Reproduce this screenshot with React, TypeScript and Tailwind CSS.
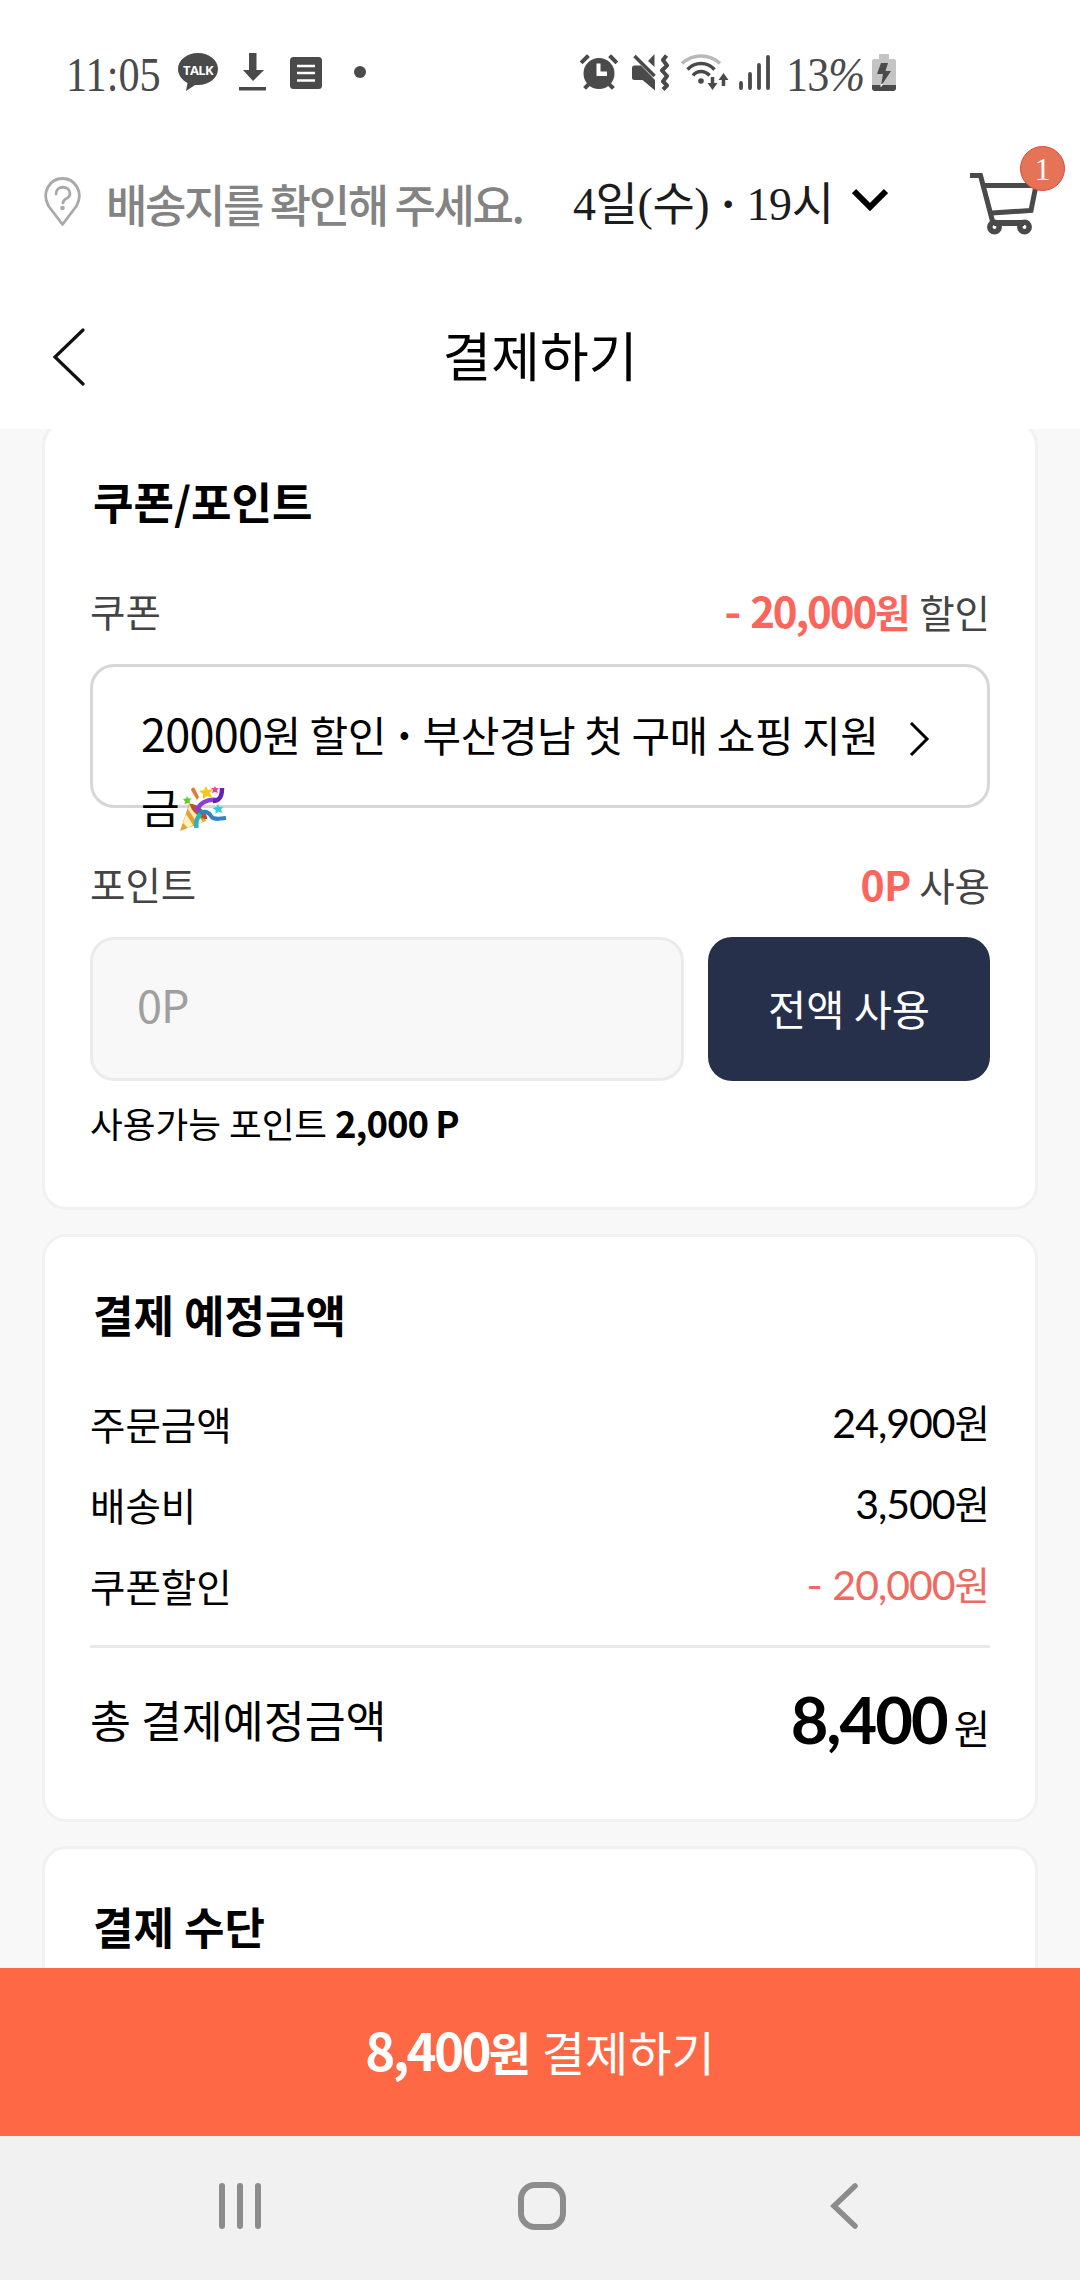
import type { ReactNode } from "react";

const prices = [
  { label: "주문금액", sign: "", amount: "24,900", color: "text-black" },
  { label: "배송비", sign: "", amount: "3,500", color: "text-black" },
  { label: "쿠폰할인", sign: "-", amount: "20,000", color: "text-[#f0695f]" },
];

const AlarmIcon = () => (
  <svg width="38" height="36" viewBox="0 0 38 36" fill="#4a4a4a">
    <path
      d="M2.500 7.500 7 3M35.500 7.500 31 3M6 33l5-5M32 33l-5-5"
      stroke="#4a4a4a"
      strokeWidth="4"
      strokeLinecap="square"
    />
    <circle cx="19" cy="19.500" r="15.500" />
    <path d="M16.500 9.500h4v8h6.500v4.500H16.500z" fill="#fff" />
  </svg>
);

const MuteIcon = () => (
  <svg width="37" height="37" viewBox="0 0 37 37" fill="#4a4a4a">
    <path d="M0 14q0-2.500 2.500-2.500H9L23 26v10.500L10.500 26H2.500Q0 26 0 23.500z" />
    <path d="M22.500 0v13L16 7z" />
    <path d="M2.500 2 22.500 22" stroke="#4a4a4a" strokeWidth="3.500" />
    <path
      d="M34.500 1.500 31 6l4 5.500-5 5 5 5.500-4 5.500 4 4-4 4"
      fill="none"
      stroke="#4a4a4a"
      strokeWidth="4"
      strokeLinejoin="round"
    />
  </svg>
);

const WifiIcon = () => (
  <svg width="49" height="37" viewBox="0 0 49 37" fill="none">
    <g stroke="#4a4a4a" strokeWidth="3.500">
      <path d="M1 9.500Q9 2 20 2t19 7.500" stroke="#b9b9b9" />
      <path d="M6.500 15.500Q12 9.500 20 9.500t13.500 6" />
      <path d="M12 21.500Q15 17.500 20 17.500T28.500 21.500" />
      <path d="M31.500 23v9M42.500 32v-9" />
    </g>
    <circle cx="20" cy="27" r="2.800" fill="#4a4a4a" />
    <path d="M26.500 29h10l-5 7zM37.500 26h10l-5-7z" fill="#4a4a4a" />
  </svg>
);

const BatteryIcon = () => (
  <svg width="24" height="37" viewBox="0 0 24 37">
    <path d="M7 0h10v5h5q2 0 2 2v27q0 3-3 3H3q-3 0-3-3V7q0-2 2-2h5z" fill="#c4c4c4" />
    <path d="M0 31h24v3q0 3-3 3H3q-3 0-3-3z" fill="#4a4a4a" />
    <path d="M9 9h7l-2.500 8H19L9 32l2-12H5z" fill="#4a4a4a" />
    <path d="m10.800 30-1.800 2.500V31z" fill="#fff" stroke="#fff" />
  </svg>
);

const StatusBar = () => (
  <div className="flex h-36 shrink-0 items-center font-['Liberation_Serif',serif] text-[48px] leading-[56px] text-[#4a4a4a]">
    <div className="ml-[66px] mt-[6px] w-[112px]">
      <span className="inline-block origin-left scale-x-[0.88]">11:05</span>
    </div>
    <div className="relative h-[38px] w-10">
      <svg width="40" height="38" viewBox="0 0 40 38">
        <path
          d="M20 0C9 0 0 7 0 16c0 6 4 11 9.500 14L8 38l9-6h3c11 0 20-7 20-16S31 0 20 0z"
          fill="#4a4a4a"
        />
      </svg>
      <span className="absolute inset-x-0 top-[6px] text-center font-['Open_Sans',sans-serif] text-[13px] font-bold leading-[22px] tracking-[-0.6px] text-white">
        TALK
      </span>
    </div>
    <svg className="ml-[21px]" width="27" height="38" viewBox="0 0 27 38" fill="#4a4a4a">
      <path d="M10 0h7.500v17H25L14 28 4 17h6zM0 34h27v3.500H0z" />
    </svg>
    <svg className="ml-6 mt-[2px]" width="32" height="32" viewBox="0 0 32 32">
      <rect width="32" height="32" rx="3.500" fill="#4a4a4a" />
      <path d="M7 9h18M7 16h18M7 23.500h18" stroke="#fff" strokeWidth="2.500" />
    </svg>
    <span className="ml-8 h-3 w-3 rounded-full bg-[#4a4a4a]" />
    <div className="ml-[214px]">
      <AlarmIcon />
    </div>
    <div className="ml-[14px]">
      <MuteIcon />
    </div>
    <div className="ml-[12px]">
      <WifiIcon />
    </div>
    <svg className="ml-[9px]" width="31" height="36" viewBox="0 0 31 36">
      <path
        d="M2 29v5M11 20v14M20 11v23M29 3v31"
        stroke="#4a4a4a"
        strokeWidth="3.800"
        strokeLinecap="round"
      />
    </svg>
    <div className="ml-[16px] mt-[6px] w-[86px]">
      <span className="inline-block origin-left scale-x-[0.92] tracking-[-1px]">
        13<i>%</i>
      </span>
    </div>
    <BatteryIcon />
  </div>
);

const DeliveryBar = () => (
  <div className="flex h-[116px] shrink-0 items-center font-['Liberation_Serif','Noto_Sans_CJK_KR',serif]">
    <svg className="ml-11" width="37" height="50" viewBox="0 0 37 50" fill="none" stroke="#a9a9a9">
      <path
        d="M18.500 47.500 4.500 29C-3 15 6 1.500 18.500 1.500S40 15 32.500 29z"
        strokeWidth="2.800"
        strokeLinejoin="round"
      />
      <path d="M12 17c0-9 14-9 14 0 0 5-7 4-7 9" strokeWidth="2.800" strokeLinecap="round" />
      <circle cx="18.500" cy="31" r="2.300" fill="#a9a9a9" stroke="none" />
    </svg>
    <p className="ml-[25px] mt-[3px] w-[468px] whitespace-nowrap font-['Noto_Sans_CJK_KR',sans-serif] text-[45px] font-medium leading-[60px] tracking-[-2.4px] text-[#838383]">
      배송지를 확인해 주세요.
    </p>
    <p className="mt-[6px] -ml-px w-[279px] whitespace-nowrap text-[46px] leading-[60px] tracking-[-0.4px] text-[#1c1c1c]">
      4일(수) <b>·</b> 19시
    </p>
    <svg className="-mt-1" width="36" height="24" viewBox="0 0 36 24" fill="none">
      <path d="m2 3 16 16L34 3" stroke="#000" strokeWidth="6" />
    </svg>
    <div className="relative ml-[82px] mt-[4px]">
      <svg width="72" height="62" viewBox="0 0 72 62" fill="none" stroke="#4a4a4a">
        <path d="M0 2.500h10.500L23 50M14 12.500h52L61 37.500 22 40" strokeWidth="5" />
        <path d="M24 50h30" strokeWidth="6" />
        <circle cx="24.500" cy="54" r="4.700" strokeWidth="5.500" />
        <circle cx="54.500" cy="54" r="4.700" strokeWidth="5.500" />
      </svg>
      <span className="absolute -top-[27px] left-[50px] flex h-[45px] w-[45px] items-center justify-center rounded-full border border-[#e0483f] bg-[#e57355] text-[32px] leading-none text-white">
        1
      </span>
    </div>
  </div>
);

const Card = ({ title, className, children }: { title: string; className: string; children?: ReactNode }) => (
  <section
    className={`shrink-0 rounded-3xl border-[3px] border-[#f1f1f1] bg-white px-[45px] pt-[47px] ${className}`}
  >
    <h2 className="pl-[3px] text-[44px] font-bold leading-[60px]">{title}</h2>
    {children}
  </section>
);

const PartyPopper = () => (
  <svg className="-mt-2 ml-px inline-block" width="48" height="46" viewBox="0 0 48 46" fill="none">
    <path d="M0 45 9 18q4-1 9 4t8 13z" fill="#e2a13c" />
    <path d="m3 37 3-9 7 11-5 3zM8 23l2-4 13 17-5 2z" fill="#fff0b8" />
    <path d="M10 18c6-1 18 8 17 15-5 1-17-8-17-15z" fill="#b9502b" />
    <path d="M11 4c1-3 3-3 4-1l4 8-2 3z" fill="#e07b2f" />
    <path d="M17 25c2-8 10-12 19-11" stroke="#8a3fd6" strokeWidth="4.500" />
    <path d="M33 15c7 0 9-5 9-13" stroke="#6a22b4" strokeWidth="4.500" />
    <path d="M18 29c4-5 10-4 13 1 2 4 8 3 15 2" stroke="#2a86bd" strokeWidth="4" />
    <path d="M16.500 42c-1-6 0-10 4-14" stroke="#29b5bc" strokeWidth="4.500" />
    <path d="m26 0 2 4 5-1-3 4 2 5-5-2-4 3v-5l-4-3 5-1z" fill="#f8c81c" />
    <path d="m35 0 1 2h3l-2 2 1 3-3-1-3 1 1-3-2-2h3z" fill="#ee3f9b" />
    <path d="m7 10 1.500 2.500h3l-2 2.500 1 3-3-1-3 1.500.500-3L3 13l3-.500z" fill="#5fce31" />
    <path d="m38 18 1.500 3 4-.500-2.500 3 1.500 3.500-4-1.500-3 2.500v-4l-3-2 4-1z" fill="#30cfd8" />
  </svg>
);

const CouponCard = () => (
  <Card title="쿠폰/포인트" className="-mt-[8px] h-[789px]">
    <div className="mt-[51px] flex h-14 items-center justify-between text-[38.5px] leading-[56px] text-[#444]">
      <span>쿠폰</span>
      <span>
        <b className="text-[#fb655c]">
          <span className="mr-[10px] inline-block scale-x-110 text-[42px]">-</span>
          <span className="text-[42px] tracking-[-2.1px]">20,000</span>원
        </b>{" "}
        할인
      </span>
    </div>
    <button className="mt-[26px] flex h-36 w-full items-start rounded-3xl border-[3px] border-[#d7d7d7] pl-[48px] text-left">
      <span className="mt-[30px] w-[760px] whitespace-nowrap text-[42px] leading-[72px] tracking-[-0.45px]">
        <span className="text-[45px] tracking-[-0.7px]">20000</span>원 할인
        <span className="-mx-[3px] font-bold"> · </span>부산경남 첫 구매 쇼핑 지원
        <br />금<PartyPopper />
      </span>
      <svg className="mt-[53px] ml-[8px]" width="22" height="38" viewBox="0 0 22 38" fill="none">
        <path d="m2 3 16 16L2 35" stroke="#000" strokeWidth="3" />
      </svg>
    </button>
    <div className="mt-[47px] flex h-14 items-center justify-between text-[38.5px] leading-[56px] text-[#444]">
      <span>포인트</span>
      <span>
        <b className="text-[41px] tracking-[-0.8px] text-[#fb655c]">0P</b> 사용
      </span>
    </div>
    <div className="mt-[26px] flex h-36 gap-6">
      <div className="flex w-[594px] items-center rounded-3xl border-[3px] border-[#ebebeb] bg-[#f8f8f8] pb-[10px] pl-[44px] text-[45px] leading-[60px] tracking-[-1px] text-[#9f9f9f]">
        0P
      </div>
      <button className="flex-1 rounded-3xl bg-[#27304b] pb-[3px] text-[41.5px] leading-[60px] text-white">
        전액 사용
      </button>
    </div>
    <p className="mt-[18px] text-[35.6px] leading-[48px]">
      사용가능 포인트 <b className="text-[36.5px] tracking-[-1px]">2,000 P</b>
    </p>
  </Card>
);

const SummaryCard = () => (
  <Card title="결제 예정금액" className="mt-6 h-[588px]">
    <div className="mt-[38px]">
      {prices.map((price) => (
        <div key={price.label} className="flex h-[81px] items-center justify-between text-[38.5px] leading-[56px]">
          <span>{price.label}</span>
          <span className={`-mt-[2px] ${price.color}`}>
            <span className="font-['Lato',sans-serif] text-[41px] tracking-[-1px]">
              {price.sign && <span className="mr-[11px] inline-block scale-x-110">{price.sign}</span>}
              {price.amount}
            </span>
            원
          </span>
        </div>
      ))}
    </div>
    <div className="mt-[20px] h-[3px] bg-[#e9e9e9]" />
    <div className="flex h-[142px] items-center justify-between text-[44.5px] leading-[60px]">
      <span>총 결제예정금액</span>
      <span className="mt-[7px] text-[39.5px]">
        <b className="mr-[7px] font-['Lato',sans-serif] text-[65px] tracking-[-2px]">8,400</b>원
      </span>
    </div>
  </Card>
);

const NavigationBar = () => (
  <div className="flex h-36 shrink-0 items-center bg-[#f1f1f1] pb-1">
    <svg className="ml-[218px]" width="44" height="46" viewBox="0 0 44 46">
      <path d="M4 3v40M22 3v40M40 3v40" stroke="#8c8c8c" strokeWidth="6" strokeLinecap="round" />
    </svg>
    <span className="ml-[256px] h-12 w-12 rounded-[17px] border-[6px] border-[#8c8c8c]" />
    <svg className="ml-[264px]" width="29" height="46" viewBox="0 0 29 46" fill="none">
      <path d="M25 3 4 23l21 20" stroke="#8c8c8c" strokeWidth="5.500" strokeLinecap="round" />
    </svg>
  </div>
);

const App = () => {
  return (
    <div className="flex h-[2280px] w-[1080px] flex-col overflow-hidden bg-white font-['Noto_Sans_CJK_KR',sans-serif] text-black">
      <StatusBar />
      <DeliveryBar />

      {/* Page title */}
      <header className="flex h-[169px] shrink-0 items-center pt-[25px]">
        <svg className="ml-[52px]" width="34" height="58" viewBox="0 0 34 58" fill="none">
          <path d="M31 2 3 29l28 27" stroke="#111" strokeWidth="3.200" strokeLinecap="round" />
        </svg>
        <h1 className="-mt-[6px] mr-[86px] flex-1 text-center text-[53px] leading-[70px]">결제하기</h1>
      </header>

      <main className="flex h-[1539px] shrink-0 flex-col overflow-hidden bg-[#f8f8f8] px-[42px]">
        <CouponCard />
        <SummaryCard />
        <Card title="결제 수단" className="mt-6 h-[300px]" />
      </main>

      <button className="h-[168px] shrink-0 bg-[#ff6845] pb-[4px] text-[47px] leading-[64px] text-white">
        <b>
          <span className="text-[51px] tracking-[-2.7px]">8,400</span>
          <span className="text-[46px]">원</span>
        </b>{" "}
        결제하기
      </button>
      <NavigationBar />
    </div>
  );
};

export default App;
